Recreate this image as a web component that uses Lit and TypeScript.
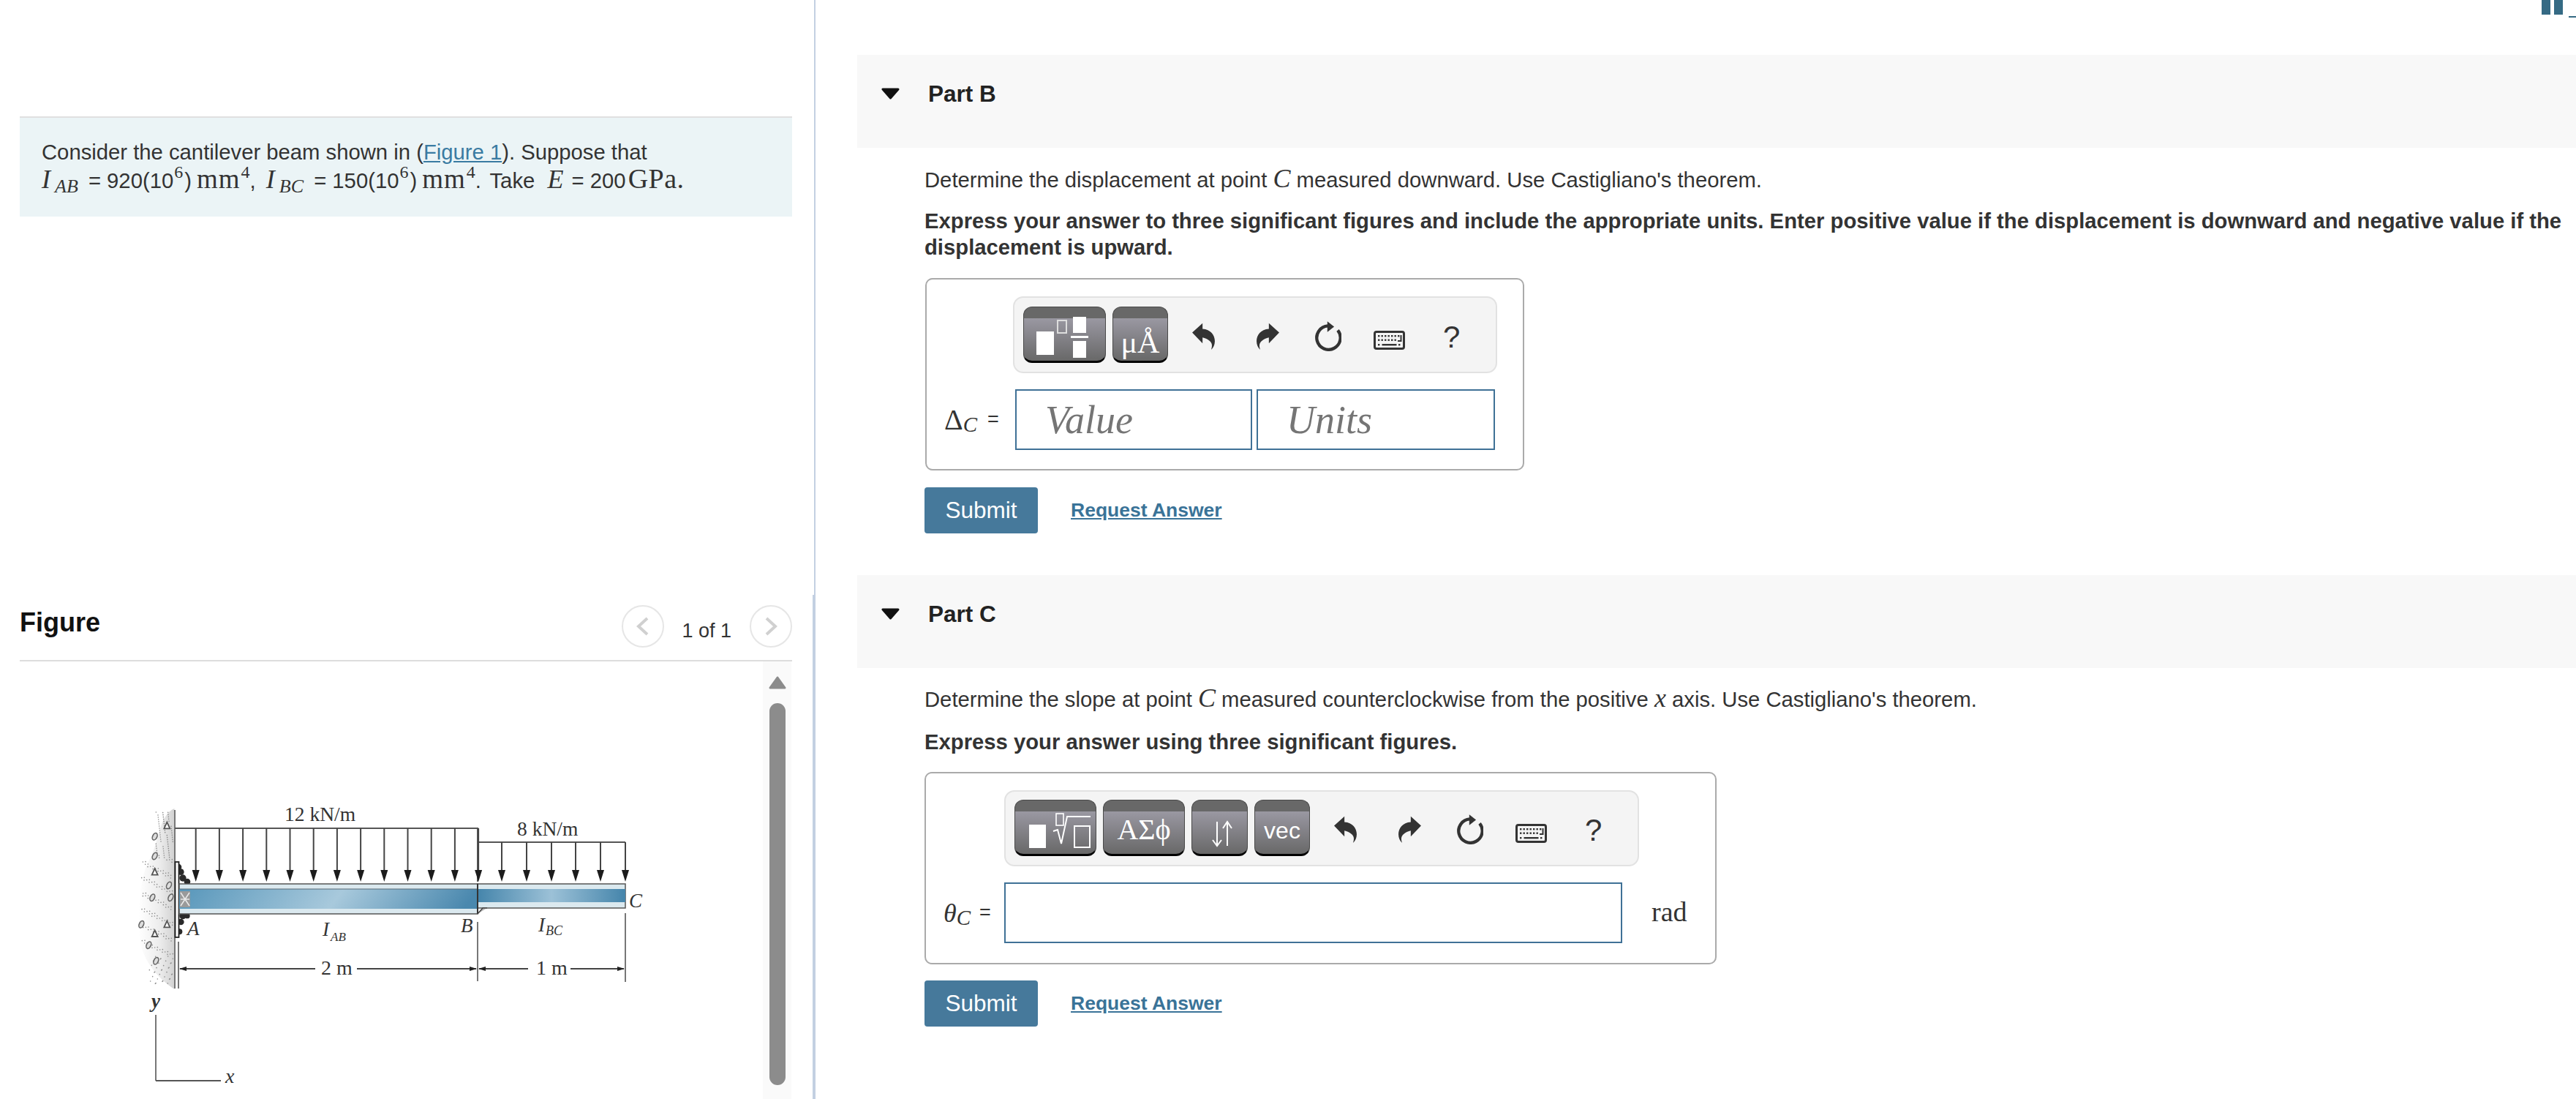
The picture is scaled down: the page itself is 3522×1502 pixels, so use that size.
import { LitElement, html, css, svg } from "lit";
import { customElement } from "lit/decorators.js";

const zx = (x: number) => x / 3 + 170;
const zy = (y: number) => y / 3 + 1090;

const load1 = Array.from({ length: 13 }, (_, i) => 267.7 + i * 32.2);
const load2 = [686, 720, 754, 787, 821, 855];

const wallDots: number[][] = [];
for (let i = 0; i < 220; i++) {
  const y = 60 + ((i * 83) % 710);
  const lim = y < 250 ? 130 : y > 650 ? 100 : 70;
  const x = lim + ((i * 37) % (200 - lim));
  wallDots.push([zx(x), zy(y)]);
}
const wallTri = [[175, 115], [125, 305], [175, 520], [125, 558]];
const wallDia = [[125, 240], [183, 360], [115, 410], [190, 410], [70, 520], [100, 605], [130, 670], [125, 160]];
const welds = [[222, 285, 10], [232, 305, 10], [240, 330, 11], [258, 345, 10], [240, 485, 11], [258, 485, 8], [232, 510, 10], [226, 550, 9]];

const arrow = (x: number, top: number) => svg`
  <line x1=${x} y1=${top} x2=${x} y2="1192" stroke="#444" stroke-width="2"></line>
  <path d="M${x - 5} 1189 L${x + 5} 1189 L${x} 1205 Z" fill="#1c1c1c"></path>`;

const undoPath = "M0 40 L42 2 L42 25 C75 27 92 50 92 75 C92 90 86 102 77 110 C82 95 82 85 72 75 C64 67 52 62 42 60 L42 84 Z";

const kbRow1 = [6, 10.5, 15, 19.5, 24, 28.5, 33];
const kbRow2 = [6, 10.5, 15, 19.5, 24, 28.5];

@customElement("app-root")
export class AppRoot extends LitElement {
  static styles = css`
    :host { display: block; height: 1502px; overflow: hidden; background: #fff; color: #333;
      font-family: "Liberation Sans", Arial, sans-serif; font-size: 29.25px; }
    .page { display: flex; height: 1502px; }
    .left { width: 1111px; flex: none; padding-left: 27px; box-sizing: border-box; padding-right: 28px;
      display: flex; flex-direction: column; }
    .divider { width: 4px; flex: none; display: flex; flex-direction: column; align-items: flex-end; }
    .div-top { width: 2px; height: 813px; background: #c3d0e2; }
    .div-bottom { width: 4px; flex: 1; background: #c3d0e2; }
    .right { flex: 1; min-width: 0; padding-left: 57px; }

    .intro { margin-top: 159px; height: 137px; box-sizing: border-box; border-top: 2px solid #e0e0e0;
      background: #ebf4f6; padding: 28px 0 0 30px; line-height: 39px; white-space: nowrap; }
    a { color: #3a7ba2; text-decoration: underline; }
    .mi { font-family: "Liberation Serif", serif; font-style: italic; font-size: 36px; line-height: 0; }
    .mn { font-family: "Liberation Serif", serif; font-size: 37px; letter-spacing: 1px; line-height: 0; }
    .gpa { font-size: 38px; margin-left: -5px; letter-spacing: 0.5px; }
    .mm { margin-left: 7px; }
    .sub { font-family: "Liberation Serif", serif; font-style: italic; font-size: 26px; position: relative; top: 6px;
      margin-left: 6px; margin-right: 6px; line-height: 0; }
    .sup { font-family: "Liberation Serif", serif; font-size: 24px; position: relative; top: -14px; margin-left: 1px; line-height: 0; }
    .sup6 { margin-right: 2px; }
    .cm { margin-right: 6px; }
    .e { margin-left: 9px; margin-right: 3px; }
    .dot { margin-right: 4px; }

    .fig-head { margin-top: 531px; height: 75px; box-sizing: content-box; border-bottom: 2px solid #ddd;
      display: flex; justify-content: space-between; align-items: flex-start; }
    .fig-title { font-size: 36px; line-height: 40px; font-weight: bold; color: #111; margin-top: 4px; }
    .nav { display: flex; align-items: flex-start; }
    .circle { width: 58px; height: 58px; box-sizing: border-box; border: 2px solid #e6e6e6; border-radius: 50%;
      display: flex; align-items: center; justify-content: center; }
    .count { font-size: 27px; line-height: 32px; margin: 19px 25px 0 24px; }
    .fig-body { flex: 1; display: flex; min-height: 0; }
    .diagram { width: 1016px; height: 598px; flex: none; display: block; }
    .scroll { width: 39px; flex: none; background: #fafafa; display: flex; flex-direction: column; align-items: center; }
    .scroll svg { margin-top: 20px; display: block; }
    .thumb { margin-top: 19px; width: 22px; height: 522px; background: #8c8c8c; border-radius: 11px; }

    .top-strip { height: 75px; display: flex; justify-content: flex-end; }
    .win { display: flex; align-items: flex-start; }
    .win-b { width: 12px; height: 20px; background: #356a84; }
    .win-b2 { margin-left: 5px; }
    .win-d { width: 10px; height: 2px; margin: 22px 0 0 8px; background: #356a84; }

    .band { background: #f8f8f8; height: 127px; box-sizing: border-box; display: flex; align-items: center; padding: 0 0 21px 32px; }
    .band svg { display: block; }
    .band b { margin-left: 38px; font-size: 31.5px; color: #222; }
    .body { padding-left: 92px; }
    p { margin: 0; line-height: 36px; }
    .q { margin-top: 25px; }
    .q-b { margin-top: 26px; }
    .ins { font-weight: bold; margin-top: 20px; }
    .ins-c { margin-top: 22px; }

    .answer { border: 2px solid #aaa; border-radius: 10px; box-sizing: border-box; height: 263px; padding-top: 23px; margin-top: 24px; }
    .answer-b { width: 819px; margin-left: 1px; }
    .answer-c { width: 1083px; margin-top: 23px; }
    .tb { height: 105px; box-sizing: border-box; border: 2px solid #e2e2e2; border-radius: 14px; background: #f4f4f4;
      display: flex; align-items: flex-start; padding-top: 12px; padding-left: 12px; }
    .tb-b { width: 662px; margin-left: 118px; }
    .tb-c { width: 868px; margin-left: 107px; height: 104px; padding-top: 11px; }
    .btn { height: 77px; box-sizing: border-box; border: 1px solid #4a4a4a; border-bottom: 3px solid #000; border-radius: 12px;
      background: linear-gradient(#686868 0, #686868 15px, #9a98a2 15px, #686868 100%); color: #fff; margin-right: 9px;
      display: flex; align-items: flex-end; justify-content: center; flex: none; overflow: hidden; }
    .btn svg { display: block; }
    .w113 { width: 113px; } .w76 { width: 76px; } .w112 { width: 112px; } .w77 { width: 77px; }
    .ser { font-family: "Liberation Serif", serif; font-size: 42px; line-height: 50px; padding-bottom: 0; }
    .greek { font-family: "Liberation Serif", serif; font-size: 40px; line-height: 50px; padding-bottom: 8px; }
    .vec { font-size: 32px; line-height: 40px; padding-bottom: 12px; }
    .icons { display: flex; align-items: flex-start; }
    .icons svg { display: block; flex: none; }
    .ic-b { margin-left: 24px; }
    .ic-c { margin-left: 24px; }
    .i-undo { margin-top: 22px; }
    .i-redo { margin-top: 22px; margin-left: 57px; }
    .i-rel { margin-top: 20px; margin-left: 48px; }
    .i-kb { margin-top: 33px; margin-left: 44px; }
    .i-q { font-size: 42px; line-height: 48px; margin-top: 18px; margin-left: 52px; color: #333; }

    .row { display: flex; align-items: stretch; margin-top: 22px; height: 83px; }
    .label { display: flex; align-items: center; padding-left: 24px; box-sizing: border-box; flex: none; white-space: nowrap; font-size: 27px; }
    .lb-b { width: 121px; }
    .lb-c { width: 107px; }
    .lsym { font-family: "Liberation Serif", serif; font-size: 40px; }
    .lsub { font-family: "Liberation Serif", serif; font-style: italic; font-size: 29px; position: relative; top: 7px; }
    .leq { margin-left: 14px; }
    .leq-c { margin-left: 12px; }
    .inp { border: 2px solid #3f7196; box-sizing: border-box; height: 83px; background: #fff; flex: none;
      font-family: "Liberation Serif", serif; font-style: italic; font-size: 54px; color: #757575;
      display: flex; align-items: center; padding-left: 39px; }
    .i-val { width: 324px; }
    .i-unit { width: 326px; margin-left: 6px; }
    .i-full { width: 845px; }
    .rad { font-family: "Liberation Serif", serif; font-size: 38px; display: flex; align-items: center; margin: -3px 0 0 40px; }

    .actions { display: flex; align-items: center; margin-top: 23px; height: 63px; }
    .actions-c { margin-top: 22px; }
    .submit { width: 155px; height: 63px; background: #46799b; color: #fff; border-radius: 4px; font-size: 31.5px;
      display: flex; align-items: center; justify-content: center; }
    .req { margin-left: 45px; font-weight: bold; font-size: 26.5px; color: #3a7398; }
    .gap { height: 57px; }
  `;

  private icons(cls: string) {
    return html`<div class="icons ${cls}">
      <svg class="i-undo" width="31" height="37" viewBox="0 0 92 110"><path d=${undoPath} fill="#333"></path></svg>
      <svg class="i-redo" width="31" height="37" viewBox="0 0 92 110"><path transform="matrix(-1 0 0 1 92 0)" d=${undoPath} fill="#333"></path></svg>
      <svg class="i-rel" width="37" height="41" viewBox="0 0 112 123">
        <path d="M97 37 A49 49 0 1 1 56 19" fill="none" stroke="#333" stroke-width="13"></path>
        <path d="M54 0 L82 22 L54 44 Z" fill="#333"></path>
      </svg>
      <svg class="i-kb" width="43" height="26" viewBox="0 0 43 26">
        <rect x="1.5" y="1.5" width="40" height="23" rx="2.5" fill="none" stroke="#333" stroke-width="3"></rect>
        ${kbRow1.map((x) => svg`<rect x=${x} y="6" width="2.4" height="2.4" fill="#333"></rect>`)}
        ${kbRow2.map((x) => svg`<rect x=${x} y="11.5" width="2.4" height="2.4" fill="#333"></rect>`)}
        <path d="M33 14 H37.5 V6" fill="none" stroke="#333" stroke-width="2"></path>
        <rect x="6" y="18" width="2.4" height="2.4" fill="#333"></rect>
        <rect x="11.5" y="18" width="20" height="2.4" fill="#333"></rect>
        <rect x="34" y="18" width="2.4" height="2.4" fill="#333"></rect>
      </svg>
      <div class="i-q">?</div>
    </div>`;
  }

  private triangle() {
    return svg`<svg width="27" height="16" viewBox="0 0 27 16"><path d="M3 2 H24 L13.5 14 Z" fill="#111" stroke="#111" stroke-width="3" stroke-linejoin="round"></path></svg>`;
  }

  private diagram() {
    const beamDefs = svg`<defs>
      <linearGradient id="web" x1="0" x2="1" y1="0" y2="0.05">
        <stop offset="0" stop-color="#5796ba"></stop><stop offset="0.55" stop-color="#a8c9dc"></stop><stop offset="1" stop-color="#4a88ae"></stop>
      </linearGradient>
      <linearGradient id="web2" x1="0" x2="1" y1="0" y2="0">
        <stop offset="0" stop-color="#4585ab"></stop><stop offset="0.5" stop-color="#9cc1d7"></stop><stop offset="1" stop-color="#4585ab"></stop>
      </linearGradient>
      <linearGradient id="wall" x1="0" x2="1" y1="0" y2="0">
        <stop offset="0" stop-color="#ffffff"></stop><stop offset="0.6" stop-color="#ececec"></stop><stop offset="1" stop-color="#d2d2d2"></stop>
      </linearGradient>
    </defs>`;
    return html`<svg class="diagram" viewBox="27 904 1016 598" font-family="Liberation Serif, serif" fill="#333">
      ${beamDefs}
      <path d="M${zx(205)} ${zy(45)} C${zx(140)} ${zy(70)} ${zx(140)} ${zy(200)} ${zx(100)} ${zy(260)} C${zx(60)} ${zy(330)} ${zx(50)} ${zy(520)} ${zx(65)} ${zy(600)} C${zx(90)} ${zy(690)} ${zx(150)} ${zy(750)} ${zx(205)} ${zy(785)} Z" fill="url(#wall)"></path>
      ${wallDots.map(([x, y]) => svg`<circle cx=${x} cy=${y} r="0.8" fill="#8a8a8a"></circle>`)}
      ${wallTri.map(([x, y]) => svg`<path d="M${zx(x)} ${zy(y - 14)} L${zx(x + 12)} ${zy(y + 12)} L${zx(x - 12)} ${zy(y + 12)} Z" fill="#fff" stroke="#555" stroke-width="1.8"></path>`)}
      ${wallDia.map(([x, y]) => svg`<ellipse cx=${zx(x)} cy=${zy(y)} rx="3" ry="5" fill="#ddd" stroke="#666" stroke-width="1.6" transform="rotate(25 ${zx(x)} ${zy(y)})"></ellipse>`)}
      <line x1="239" y1="1107" x2="239" y2="1351" stroke="#777" stroke-width="2"></line>
      ${welds.map(([x, y, r]) => svg`<circle cx=${zx(x)} cy=${zy(y)} r=${r / 3 + 1} fill="#2a2a2a"></circle>`)}
      <rect x="239.5" y="1178" width="5" height="103" fill="#fff" stroke="#222" stroke-width="1.8"></rect>

      <path d="M239 1132 H653 V1205" fill="none" stroke="#555" stroke-width="2"></path>
      <path d="M653 1151 H855" fill="none" stroke="#555" stroke-width="2"></path>
      ${load1.map((x) => arrow(x, 1132))}
      ${load2.map((x) => arrow(x, 1151))}

      <rect x="245" y="1208" width="408" height="41" fill="#dbe9ef" stroke="#555" stroke-width="1.5"></rect>
      <rect x="245" y="1215" width="408" height="27" fill="url(#web)"></rect>
      <line x1="245" y1="1215" x2="653" y2="1215" stroke="#5b6b74" stroke-width="1"></line>
      <rect x="653" y="1208" width="202" height="33" fill="#dbe9ef" stroke="#555" stroke-width="1.5"></rect>
      <rect x="653" y="1215" width="202" height="18" fill="url(#web2)"></rect>
      <line x1="653" y1="1208" x2="653" y2="1249" stroke="#333" stroke-width="2"></line>
      <path d="M653 1249 L660 1241 H666" fill="#bbb" stroke="#444" stroke-width="1.5"></path>
      <rect x="246" y="1218" width="14" height="22" fill="#9a9a9a"></rect>
      <path d="M247 1220 L259 1238 M259 1220 L247 1238 M247 1229 H259" stroke="#e8e8e8" stroke-width="1.6"></path>

      <line x1="244" y1="1287" x2="244" y2="1351" stroke="#777" stroke-width="2"></line>
      <line x1="653" y1="1260" x2="653" y2="1341" stroke="#777" stroke-width="2"></line>
      <line x1="855" y1="1248" x2="855" y2="1342" stroke="#777" stroke-width="2"></line>
      <path d="M246 1324 H431 M488 1324 H651 M655 1324 H722 M780 1324 H853" stroke="#444" stroke-width="1.8"></path>
      <path d="M245 1324 L255 1321 V1327 Z M652 1324 L642 1321 V1327 Z M654 1324 L664 1321 V1327 Z M854 1324 L844 1321 V1327 Z" fill="#222"></path>
      <line x1="213" y1="1387" x2="213" y2="1477" stroke="#777" stroke-width="2"></line>
      <line x1="213" y1="1477" x2="302" y2="1477" stroke="#555" stroke-width="2"></line>

      <text x="389" y="1122" font-size="27.5">12 kN/m</text>
      <text x="707" y="1142" font-size="27.5">8 kN/m</text>
      <text x="256" y="1278" font-size="27" font-style="italic">A</text>
      <text x="441" y="1279" font-size="27" font-style="italic">I</text>
      <text x="452" y="1286" font-size="17" font-style="italic">AB</text>
      <text x="630" y="1274" font-size="27" font-style="italic">B</text>
      <text x="736" y="1273" font-size="27" font-style="italic">I</text>
      <text x="746" y="1278" font-size="18" font-style="italic">BC</text>
      <text x="860" y="1240" font-size="27" font-style="italic">C</text>
      <text x="439" y="1332" font-size="28">2 m</text>
      <text x="733" y="1332" font-size="28">1 m</text>
      <text x="207" y="1377" font-size="27" font-style="italic" font-weight="bold">y</text>
      <text x="308" y="1480" font-size="28" font-style="italic">x</text>
    </svg>`;
  }

  render() {
    return html`<div class="page">
      <div class="left">
        <div class="intro">
          <div>Consider the cantilever beam shown in (<a>Figure 1</a>). Suppose that</div>
          <div><span class="mi">I</span><span class="sub">AB</span> = 920(10<span class="sup sup6">6</span>)<span class="mn mm">mm</span><span class="sup">4</span><span class="cm">,</span> <span class="mi">I</span><span class="sub">BC</span> = 150(10<span class="sup sup6">6</span>)<span class="mn mm">mm</span><span class="sup">4</span><span class="dot">.</span> Take <span class="mi e">E</span> = 200 <span class="mn gpa">GPa.</span></div>
        </div>
        <div class="fig-head">
          <div class="fig-title">Figure</div>
          <div class="nav">
            <div class="circle"><svg width="18" height="28" viewBox="0 0 18 28"><path d="M15 3 L3 14 L15 25" fill="none" stroke="#d0d0d0" stroke-width="4"></path></svg></div>
            <div class="count">1 of 1</div>
            <div class="circle"><svg width="18" height="28" viewBox="0 0 18 28"><path d="M3 3 L15 14 L3 25" fill="none" stroke="#d0d0d0" stroke-width="4"></path></svg></div>
          </div>
        </div>
        <div class="fig-body">
          ${this.diagram()}
          <div class="scroll">
            <svg width="24" height="18" viewBox="0 0 24 18"><path d="M12 2 L22 16 H2 Z" fill="#8c8c8c" stroke="#8c8c8c" stroke-width="3" stroke-linejoin="round"></path></svg>
            <div class="thumb"></div>
          </div>
        </div>
      </div>
      <div class="divider"><div class="div-top"></div><div class="div-bottom"></div></div>
      <div class="right">
        <div class="top-strip">
          <div class="win"><div class="win-b"></div><div class="win-b win-b2"></div><div class="win-d"></div></div>
        </div>
        <div class="band">${this.triangle()}<b>Part B</b></div>
        <div class="body">
          <p class="q-b">Determine the displacement at point <span class="mi">C</span> measured downward. Use Castigliano's theorem.</p>
          <p class="ins">Express your answer to three significant figures and include the appropriate units. Enter positive value if the displacement is downward and negative value if the displacement is upward.</p>
          <div class="answer answer-b">
            <div class="tb tb-b">
              <div class="btn w113"><svg width="111" height="73" viewBox="1400 419 111 73">
                <rect x="1417" y="452" width="24" height="32" fill="#fff"></rect>
                <rect x="1446" y="437" width="12" height="17" fill="none" stroke="#ddd" stroke-width="2"></rect>
                <rect x="1467" y="432" width="18" height="22" fill="#fff"></rect>
                <rect x="1464" y="458" width="24" height="3" fill="#fff"></rect>
                <rect x="1467" y="465" width="18" height="23" fill="#fff"></rect>
              </svg></div>
              <div class="btn w76"><span class="ser">μÅ</span></div>
              ${this.icons("ic-b")}
            </div>
            <div class="row">
              <div class="label lb-b"><span class="lsym">Δ</span><span class="lsub">C</span><span class="leq">=</span></div>
              <div class="inp i-val">Value</div>
              <div class="inp i-unit">Units</div>
            </div>
          </div>
          <div class="actions"><div class="submit">Submit</div><a class="req">Request Answer</a></div>
        </div>
        <div class="gap"></div>
        <div class="band">${this.triangle()}<b>Part C</b></div>
        <div class="body">
          <p class="q">Determine the slope at point <span class="mi">C</span> measured counterclockwise from the positive <span class="mi">x</span> axis. Use Castigliano's theorem.</p>
          <p class="ins ins-c">Express your answer using three significant figures.</p>
          <div class="answer answer-c">
            <div class="tb tb-c">
              <div class="btn w112"><svg width="110" height="73" viewBox="1387 1093 110 73">
                <rect x="1406" y="1126" width="23" height="32" fill="#fff"></rect>
                <rect x="1443" y="1111" width="10" height="16" fill="none" stroke="#fff" stroke-width="1.6"></rect>
                <path d="M1439 1135 L1445 1133 L1450 1152 L1458 1115 H1490" fill="none" stroke="#fff" stroke-width="2"></path>
                <rect x="1468" y="1128" width="21" height="29" fill="none" stroke="#fff" stroke-width="2"></rect>
              </svg></div>
              <div class="btn w112"><span class="greek">ΑΣϕ</span></div>
              <div class="btn w77"><svg width="75" height="73" viewBox="1630 1093 75 73">
                <path d="M1664 1122 V1154 M1658 1147 L1664 1155 L1670 1147 M1678 1155 V1123 M1672 1131 L1678 1122 L1684 1131" fill="none" stroke="#fff" stroke-width="2"></path>
              </svg></div>
              <div class="btn w76"><span class="vec">vec</span></div>
              ${this.icons("ic-c")}
            </div>
            <div class="row">
              <div class="label lb-c"><span class="mi">θ</span><span class="lsub">C</span><span class="leq leq-c">=</span></div>
              <div class="inp i-full"></div>
              <div class="rad">rad</div>
            </div>
          </div>
          <div class="actions actions-c"><div class="submit">Submit</div><a class="req">Request Answer</a></div>
        </div>
      </div>
    </div>`;
  }
}
